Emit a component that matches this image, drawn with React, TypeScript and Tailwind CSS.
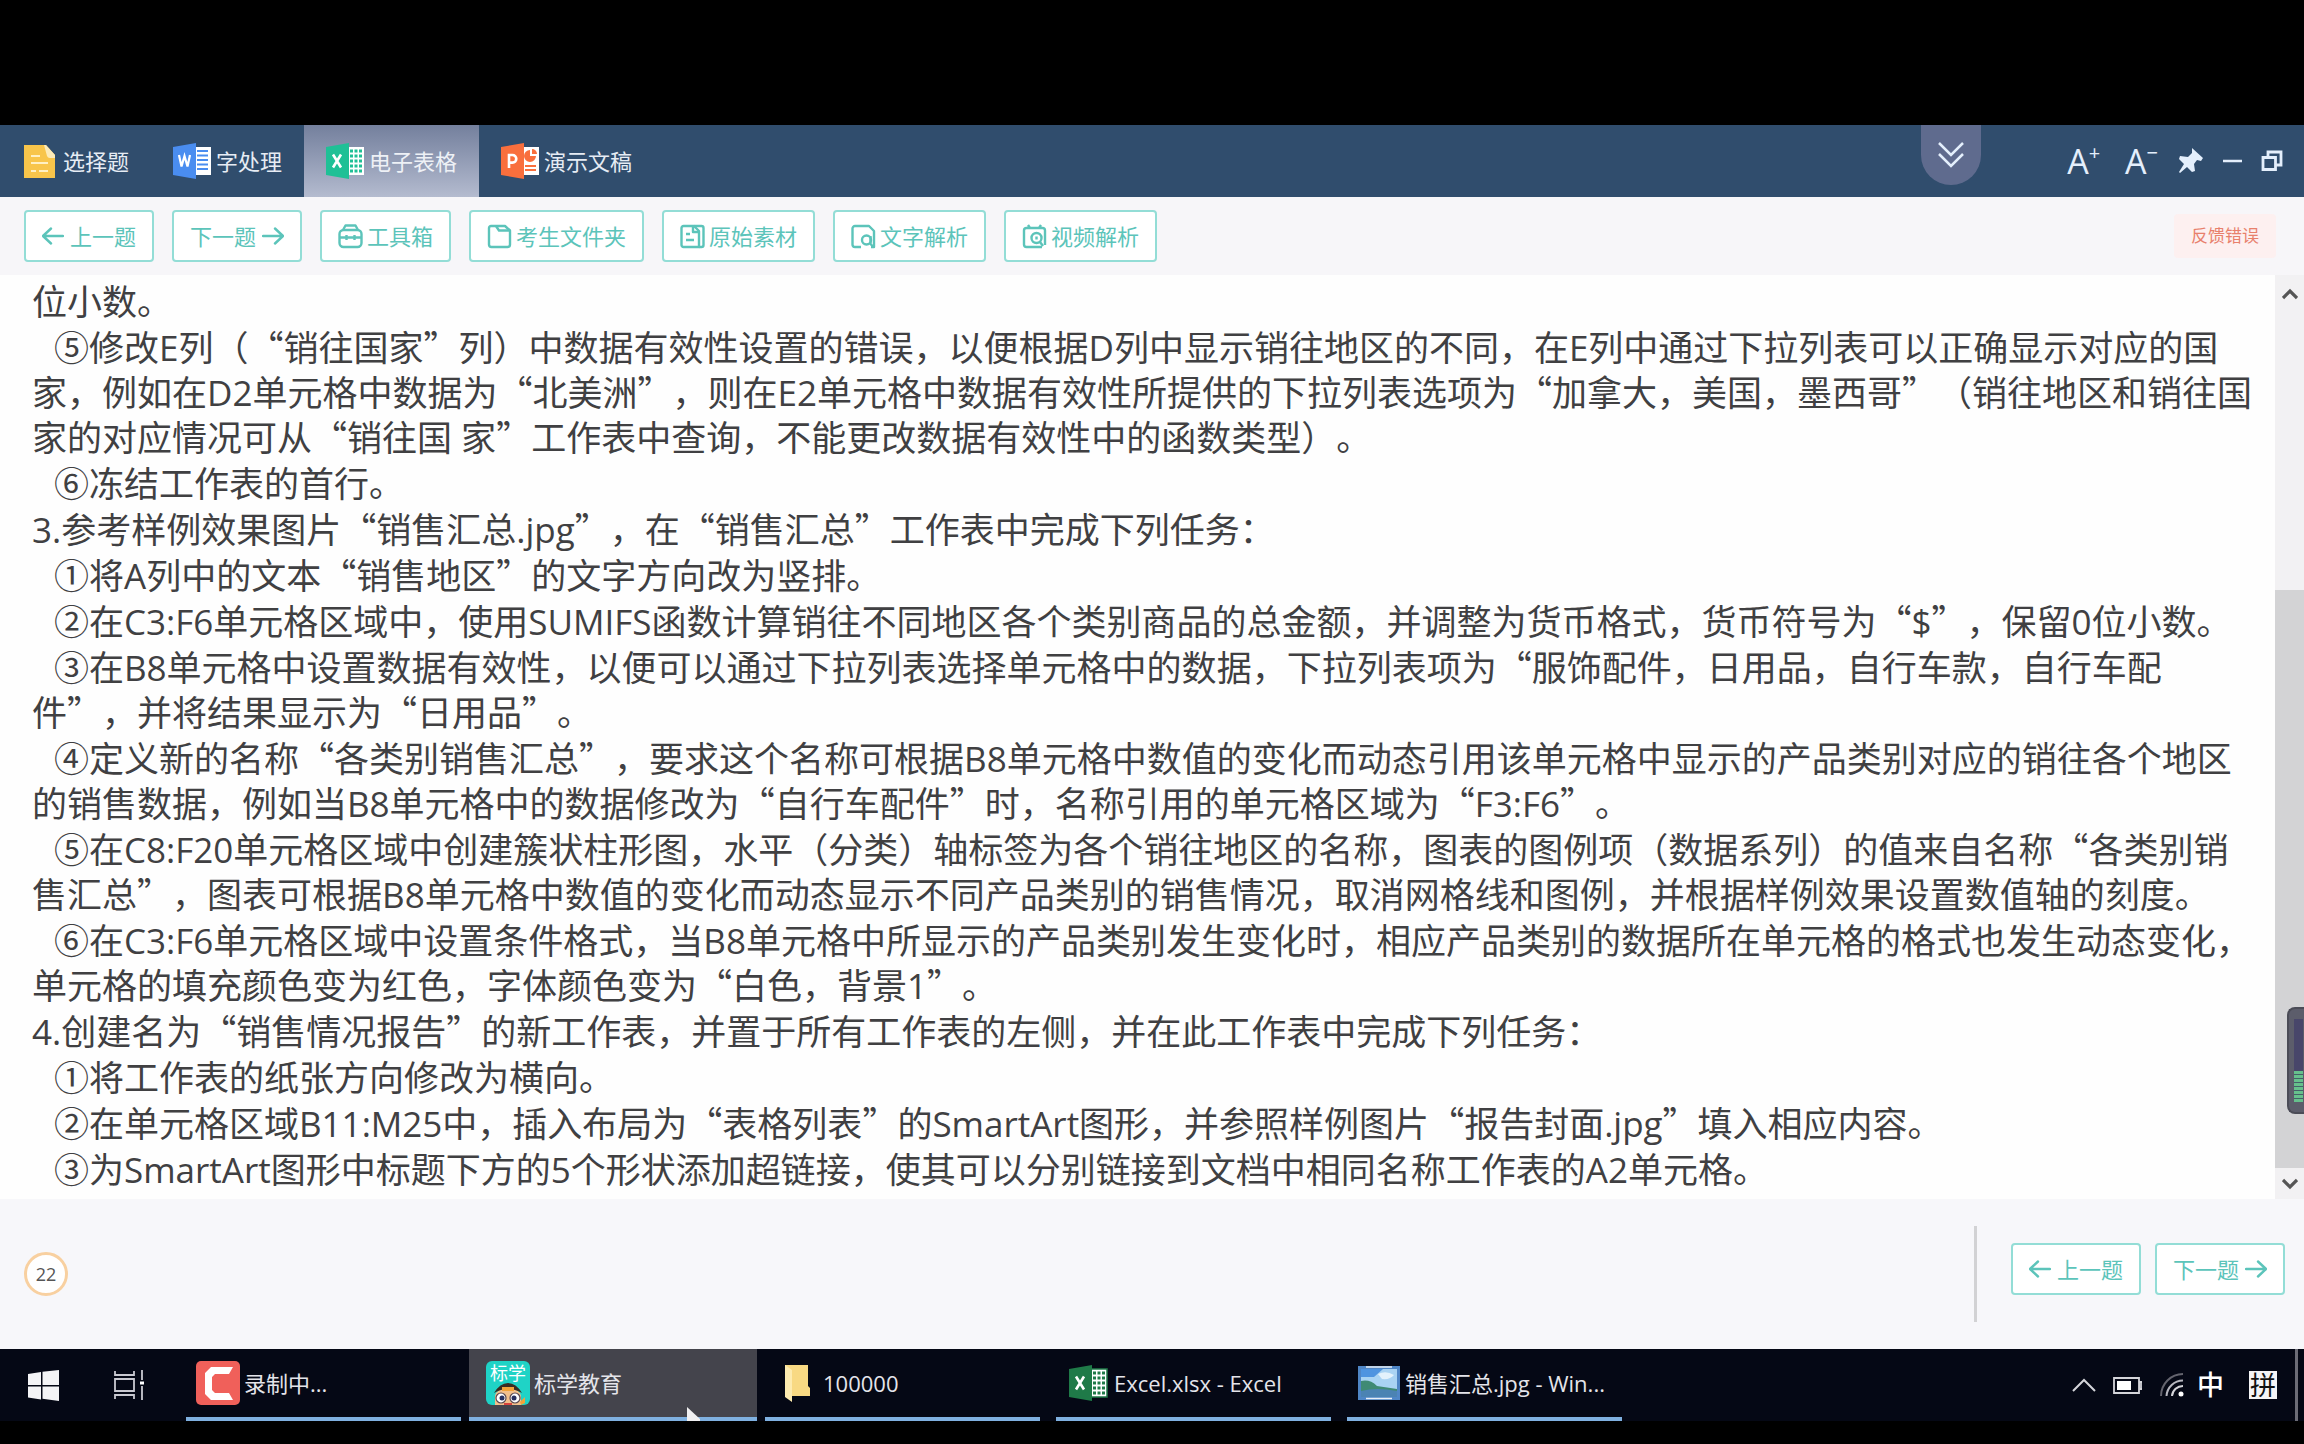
import React from "react";

const paragraphs: { indent: boolean; lines: string[] }[] = [
  { indent: false, lines: ["位小数。"] },
  {
    indent: true,
    lines: [
      "⑤修改E列（“销往国家”列）中数据有效性设置的错误，以便根据D列中显示销往地区的不同，在E列中通过下拉列表可以正确显示对应的国",
      "家，例如在D2单元格中数据为“北美洲”，则在E2单元格中数据有效性所提供的下拉列表选项为“加拿大，美国，墨西哥”（销往地区和销往国",
      "家的对应情况可从“销往国 家”工作表中查询，不能更改数据有效性中的函数类型）。",
    ],
  },
  { indent: true, lines: ["⑥冻结工作表的首行。"] },
  { indent: false, lines: ["3.参考样例效果图片“销售汇总.jpg”，在“销售汇总”工作表中完成下列任务："] },
  { indent: true, lines: ["①将A列中的文本“销售地区”的文字方向改为竖排。"] },
  {
    indent: true,
    lines: [
      "②在C3:F6单元格区域中，使用SUMIFS函数计算销往不同地区各个类别商品的总金额，并调整为货币格式，货币符号为“$”，保留0位小数。",
    ],
  },
  {
    indent: true,
    lines: [
      "③在B8单元格中设置数据有效性，以便可以通过下拉列表选择单元格中的数据，下拉列表项为“服饰配件，日用品，自行车款，自行车配",
      "件”，并将结果显示为“日用品”。",
    ],
  },
  {
    indent: true,
    lines: [
      "④定义新的名称“各类别销售汇总”，要求这个名称可根据B8单元格中数值的变化而动态引用该单元格中显示的产品类别对应的销往各个地区",
      "的销售数据，例如当B8单元格中的数据修改为“自行车配件”时，名称引用的单元格区域为“F3:F6”。",
    ],
  },
  {
    indent: true,
    lines: [
      "⑤在C8:F20单元格区域中创建簇状柱形图，水平（分类）轴标签为各个销往地区的名称，图表的图例项（数据系列）的值来自名称“各类别销",
      "售汇总”，图表可根据B8单元格中数值的变化而动态显示不同产品类别的销售情况，取消网格线和图例，并根据样例效果设置数值轴的刻度。",
    ],
  },
  {
    indent: true,
    lines: [
      "⑥在C3:F6单元格区域中设置条件格式，当B8单元格中所显示的产品类别发生变化时，相应产品类别的数据所在单元格的格式也发生动态变化，",
      "单元格的填充颜色变为红色，字体颜色变为“白色，背景1”。",
    ],
  },
  { indent: false, lines: ["4.创建名为“销售情况报告”的新工作表，并置于所有工作表的左侧，并在此工作表中完成下列任务："] },
  { indent: true, lines: ["①将工作表的纸张方向修改为横向。"] },
  {
    indent: true,
    lines: ["②在单元格区域B11:M25中，插入布局为“表格列表”的SmartArt图形，并参照样例图片“报告封面.jpg”填入相应内容。"],
  },
  {
    indent: true,
    lines: ["③为SmartArt图形中标题下方的5个形状添加超链接，使其可以分别链接到文档中相同名称工作表的A2单元格。"],
  },
];

/* Curly quotes take the full-width form of the Chinese face. */
function Line({ text, indent }: { text: string; indent: boolean }) {
  return (
    <span className={indent ? "block whitespace-nowrap pl-[22px]" : "block whitespace-nowrap"}>
      {text.split(/([“”])/).map((part, i) =>
        part === "“" || part === "”" ? (
          <span key={i} className='font-["Noto_Sans_CJK_SC",sans-serif] leading-none'>
            {part}
          </span>
        ) : (
          part
        ),
      )}
    </span>
  );
}

function DocIcon() {
  return (
    <svg width="35" height="34" viewBox="0 0 35 34">
      <path d="M0 1h22l9 10v23H0z" fill="#f8c54b" />
      <path d="M20 1h2l9 10v3h-5a3 3 0 0 1-3-2z" fill="#fdebb8" />
      <path d="M7 12h9M7 19h17M7 27h5M15 27h9" stroke="#fff0c4" strokeWidth="2" />
    </svg>
  );
}

function OfficeIcon({ kind, color, dark }: { kind: "W" | "X" | "P"; color: string; dark?: boolean }) {
  return (
    <svg width="39" height="36" viewBox="0 0 39 36">
      <path d="M20 4h18v28H20z" fill="#fff" stroke={dark ? color : "none"} strokeWidth="1.5" />
      {kind === "W" && <path d="M24 8h11M24 12.500h11M24 17h11M24 21.500h11M24 26h11" stroke={color} strokeWidth="2.200" />}
      {kind === "X" && (
        <path
          d="M24 8h3M28.500 8h3M33 8h3M24 13h3M28.500 13h3M33 13h3M24 18h3M28.500 18h3M33 18h3M24 23h3M28.500 23h3M33 23h3M24 28h3M28.500 28h3M33 28h3"
          stroke={color}
          strokeWidth="3.200"
        />
      )}
      {kind === "P" && (
        <>
          <path d="M29 7a6 6 0 1 0 6 6h-6z" fill={color} />
          <path d="M31 6a5 5 0 0 1 5 5h-5z" fill={color} />
          <path d="M24 23h11M24 27h11" stroke={color} strokeWidth="2" />
        </>
      )}
      <path d="M0 4L23 0v36L0 32z" fill={color} />
      {kind === "W" && <path d="M6 12l2.500 11.500L11.500 13l3 10.500L17 12" fill="none" stroke="#fff" strokeWidth="2.200" />}
      {kind === "X" && <path d="M7 11.500l8 13M15 11.500L7 24.500" stroke="#fff" strokeWidth="2.600" />}
      {kind === "P" && <path d="M8 25V12h3.500a3.800 3.800 0 0 1 0 7.600H8" fill="none" stroke="#fff" strokeWidth="2.600" />}
    </svg>
  );
}

function Arrow({ right }: { right?: boolean }) {
  return (
    <svg width="22" height="20" viewBox="0 0 22 20" fill="none" stroke="currentColor" strokeWidth="2.400" strokeLinecap="round" strokeLinejoin="round">
      {right ? <path d="M1 10h20M13 2.500l8 7.500-8 7.500" /> : <path d="M21 10H1M9 2.500L1 10l8 7.500" />}
    </svg>
  );
}

const toolPaths: Record<string, React.ReactNode> = {
  box: (
    <>
      <rect x="1.500" y="6" width="22" height="17" rx="4" />
      <path d="M5 6l2.500-4.500h10L20 6M1.500 13.500h22M8.500 11v5M16.500 11v5" />
    </>
  ),
  folder: (
    <>
      <path d="M4 2h14l5 4.500V20.500A2.500 2.500 0 0 1 20.500 23H4.500A2.500 2.500 0 0 1 2 20.500V4a2 2 0 0 1 2-2z" />
      <path d="M9 2l3 4.500h11" />
    </>
  ),
  source: (
    <>
      <path d="M3.500 2H14l5 5v16H3.500A2 2 0 0 1 1.500 21V4a2 2 0 0 1 2-2z" />
      <path d="M13 2v6h6M14 2h7.500a2 2 0 0 1 2 2v17a2 2 0 0 1-2 2H19M6 10h4M6 16h8" />
    </>
  ),
  text: (
    <>
      <path d="M10 23H4a2.500 2.500 0 0 1-2.500-2.500v-16A2.500 2.500 0 0 1 4 2h14l5 5v16h-3" />
      <circle cx="15.500" cy="16" r="4.500" />
      <path d="M19.500 12v8l3 3" />
    </>
  ),
  video: (
    <>
      <path d="M20 23H4.500A2.500 2.500 0 0 1 2 20.500V6.500A2.500 2.500 0 0 1 4.500 4h16A2.500 2.500 0 0 1 23 6.500V21M6 1l2 3M19 1l-2 3" />
      <circle cx="14.500" cy="14" r="5" />
      <path d="M14.500 12.500v3M18 18l3 4" />
    </>
  ),
};

function ToolIcon({ name }: { name: string }) {
  return (
    <svg width="25" height="25" viewBox="0 0 25 25" fill="none" stroke="currentColor" strokeWidth="2.400" strokeLinejoin="round">
      {toolPaths[name]}
    </svg>
  );
}

function ToolButton({ children }: { children: React.ReactNode }) {
  return (
    <button
      type="button"
      className="flex h-[52px] items-center justify-center gap-1 rounded-sm border-2 border-[#93ddd6] bg-white px-4 text-[22px] leading-8 whitespace-nowrap text-[#5cc4ba]"
    >
      {children}
    </button>
  );
}

function Prev() {
  return (
    <ToolButton>
      <Arrow />
      <span className="pl-0.5">上一题</span>
    </ToolButton>
  );
}

function Next() {
  return (
    <ToolButton>
      <span className="pr-0.5">下一题</span>
      <Arrow right />
    </ToolButton>
  );
}

const tabs = [
  { label: "选择题", icon: <DocIcon />, active: false },
  { label: "字处理", icon: <OfficeIcon kind="W" color="#4a8df0" />, active: false },
  { label: "电子表格", icon: <OfficeIcon kind="X" color="#1fc096" />, active: true },
  { label: "演示文稿", icon: <OfficeIcon kind="P" color="#f96f3d" />, active: false },
];

function Header() {
  return (
    <header className="flex h-[72px] items-stretch justify-between bg-[#304d6d]">
      <nav className="flex pl-0.5">
        {tabs.map((t) => (
          <button
            key={t.label}
            type="button"
            className={
              t.active
                ? "flex items-center gap-1 bg-linear-to-b from-[#74809d] to-[#b4bbcf] px-[22px] text-[22px] text-[#eef1f6]"
                : "flex items-center gap-1 px-[22px] text-[22px] text-[#e6ecf4]"
            }
          >
            {t.icon}
            <span>{t.label}</span>
          </button>
        ))}
      </nav>
      <div className="flex items-center pr-[21px] text-[#e4effc]">
        <button type="button" aria-label="展开" className="mr-[86px] flex h-[60px] w-[60px] items-center justify-center self-start rounded-b-full bg-[#5f6b8e]">
          <svg width="26" height="26" viewBox="0 0 26 26" fill="none" stroke="currentColor" strokeWidth="2.500">
            <path d="M1 1l12 12L25 1M1 12l12 12 12-12" />
          </svg>
        </button>
        <button type="button" aria-label="放大字体" className="mr-[25px] flex text-[34px] leading-9">
          A<sup className="top-0 text-xl leading-5">+</sup>
        </button>
        <button type="button" aria-label="缩小字体" className="mr-5 flex text-[34px] leading-9">
          A<sup className="top-0 text-xl leading-5">−</sup>
        </button>
        <button type="button" aria-label="置顶" className="mr-[18px]">
          <svg width="26" height="26" viewBox="0 0 26 26" fill="currentColor">
            <path d="M14 0l11 10-2 3-4-1-3 4 1 7-3 1-5-5-7 6-1-1 5-8-5-5 1-3 8 1 4-4z" />
          </svg>
        </button>
        <button type="button" aria-label="最小化" className="mr-[18px]">
          <svg width="21" height="20" viewBox="0 0 21 20">
            <path d="M1 10h19" stroke="currentColor" strokeWidth="2.500" />
          </svg>
        </button>
        <button type="button" aria-label="还原">
          <svg width="22" height="22" viewBox="0 0 22 22" fill="none" stroke="currentColor" strokeWidth="2.800">
            <path d="M2 7.500h12.500v12H2zM7 7V2h13v13h-5" />
          </svg>
        </button>
      </div>
    </header>
  );
}

function Toolbar() {
  return (
    <div className="flex h-[78px] items-center justify-between bg-[#f7f6f9] pr-7 pl-6">
      <div className="flex gap-[18px]">
        <Prev />
        <Next />
        <ToolButton>
          <ToolIcon name="box" />
          工具箱
        </ToolButton>
        <ToolButton>
          <ToolIcon name="folder" />
          考生文件夹
        </ToolButton>
        <ToolButton>
          <ToolIcon name="source" />
          原始素材
        </ToolButton>
        <ToolButton>
          <ToolIcon name="text" />
          文字解析
        </ToolButton>
        <ToolButton>
          <ToolIcon name="video" />
          视频解析
        </ToolButton>
      </div>
      <button type="button" className="h-11 rounded-sm bg-[#fdf0f0] px-[17px] text-[17px] text-[#e8806c]">
        反馈错误
      </button>
    </div>
  );
}

function ScrollArrow({ down }: { down?: boolean }) {
  return (
    <svg width="16" height="12" viewBox="0 0 16 12" fill="none" stroke="#555" strokeWidth="3.200">
      {down ? <path d="M1 2l7 7 7-7" /> : <path d="M1 10l7-7 7 7" />}
    </svg>
  );
}

function Content() {
  return (
    <main className="relative flex flex-1 bg-[#fefefe]">
      <article className="flex flex-1 flex-col gap-px pt-1 pl-8 text-[35px] leading-[45px] text-[#404042] [text-spacing-trim:space-all]">
        {paragraphs.map((p, i) => (
          <p key={i}>
            {p.lines.map((l, j) => (
              <Line key={j} text={l} indent={p.indent && j === 0} />
            ))}
          </p>
        ))}
      </article>
      <div className="flex w-[29px] flex-col items-center bg-[#f2f1f3]">
        <div className="flex h-[34px] items-center pt-1">
          <ScrollArrow />
        </div>
        <div className="flex w-full flex-1 flex-col justify-end">
          <div className="h-[578px] bg-[#d3d3d5]" />
        </div>
        <div className="flex h-[31px] items-center">
          <ScrollArrow down />
        </div>
      </div>
      <div className="absolute right-0 bottom-[85px] h-[107px] w-[17px] rounded-l-lg border-2 border-r-0 border-[#4b4c57] bg-[#5c5d6b] py-[10px] pl-[5px]">
        <div className="h-[52px] w-[9px] bg-[#48466a]" />
        <div className="h-[31px] w-[9px] bg-[repeating-linear-gradient(#66c08c_0_3px,#45606a_3px_4px)]" />
      </div>
    </main>
  );
}

function Footer() {
  return (
    <footer className="flex h-[150px] items-center justify-between bg-[#f7f7fa] pr-[19px] pl-6">
      <button type="button" className="h-[44px] w-[44px] rounded-full border-[3px] border-[#f8d0a0] bg-white text-lg leading-9 text-[#555]">
        22
      </button>
      <div className="flex items-center">
        <div className="mr-[34px] h-24 w-[3px] bg-[#d2d2d4]" />
        <div className="flex gap-[14px] pb-[10px]">
          <Prev />
          <Next />
        </div>
      </div>
    </footer>
  );
}

function CamtasiaIcon() {
  return (
    <svg width="44" height="44" viewBox="0 0 44 44">
      <rect width="44" height="44" rx="5" fill="#f0605a" />
      <path d="M37 6l-4 7H19l-3 3v13l3 3h14l4 7H15l-6-6V12l6-6z" fill="#fff" />
    </svg>
  );
}

function BiaoxueIcon() {
  return (
    <span className="relative flex h-11 w-11 justify-center overflow-hidden rounded-md bg-[#1fd3c6]">
      <span className="text-[18px] leading-6 whitespace-nowrap text-white">标学</span>
      <svg className="absolute bottom-0 left-1" width="36" height="22" viewBox="0 0 36 22">
        <path d="M5 22V13q2-8 13-8t13 8v9z" fill="#f3c08b" />
        <path d="M4 10Q10 0 18 0t14 10q-7-4-14-4T4 10z" fill="#3a2c22" />
        <path d="M12 4h12v4H12z" fill="#f3a33a" />
        <circle cx="11" cy="15" r="5" fill="#fff" stroke="#5a4a52" strokeWidth="1.200" />
        <circle cx="25" cy="15" r="5" fill="#fff" stroke="#5a4a52" strokeWidth="1.200" />
        <circle cx="12" cy="15" r="2.500" fill="#27305f" />
        <circle cx="24" cy="15" r="2.500" fill="#27305f" />
        <path d="M14 20h8v2h-8z" fill="#d9433d" />
        <path d="M30 19l5-5v6l-4 2z" fill="#f3a33a" />
      </svg>
    </span>
  );
}

function FolderIcon() {
  return (
    <svg width="26" height="38" viewBox="0 0 26 38">
      <path d="M1 1h23v21l2 2v8H1z" fill="#f8d983" />
      <path d="M1 1l7 5v32l-7-5z" fill="#fdebb0" />
    </svg>
  );
}

function PictureIcon() {
  return (
    <svg width="42" height="34" viewBox="0 0 42 34">
      <rect width="42" height="34" fill="#4f86c6" />
      <rect x="3" y="3" width="36" height="28" fill="#a9d3f3" />
      <path d="M3 3h22l-9 8H3z" fill="#4f94e0" />
      <path d="M20 8q8-4 16 1-4 5-12 4z" fill="#e3f2fc" />
      <path d="M3 15q9-2 16 5l20 3v8H3z" fill="#3f8a74" />
      <path d="M3 25q16-4 36 0v6H3z" fill="#4b83b3" />
      <path d="M8 1h26M8 32.500h26" stroke="#e8eef5" strokeWidth="1.500" />
    </svg>
  );
}

const tasks = [
  { label: "录制中...", icon: <CamtasiaIcon />, active: false },
  { label: "标学教育", icon: <BiaoxueIcon />, active: true },
  { label: "100000", icon: <FolderIcon />, active: false },
  { label: "Excel.xlsx - Excel", icon: <OfficeIcon kind="X" color="#1f7a48" dark />, active: false },
  { label: "销售汇总.jpg - Win...", icon: <PictureIcon />, active: false },
];

function Taskbar() {
  return (
    <div className="relative flex h-[72px] items-stretch bg-[#050815] text-[#e4e4ea]">
      <button type="button" aria-label="开始" className="flex w-[86px] items-center justify-center">
        <svg width="31" height="31" viewBox="0 0 31 31" fill="#f4f4f6">
          <path d="M0 4l13-2v13H0zM14.500 1.800L31 0v15H14.500zM0 16.500h13v13L0 27.500zM14.500 16.500H31V31l-16.500-2.200z" />
        </svg>
      </button>
      <button type="button" aria-label="任务视图" className="flex w-[86px] items-center justify-center">
        <svg width="32" height="30" viewBox="0 0 32 30" fill="none" stroke="#c9c9d0" strokeWidth="1.800">
          <path d="M2 1v4h19V1M2 9h19v12H2zM2 29v-4h19v4M29 0v10M29 16v14" />
          <path d="M27 11.500h4v3h-4z" fill="#fff" stroke="none" />
        </svg>
      </button>
      <div className="flex flex-1 pl-[6px]">
        {tasks.map((t) => (
          <button
            key={t.label}
            type="button"
            className={
              t.active
                ? "flex w-[288px] items-center gap-1 border-b-4 border-[#7fb0e0] bg-[#44444c] pl-[17px] text-[22px] whitespace-nowrap"
                : "mx-2 flex w-[275px] items-center gap-1 border-b-4 border-[#7fb0e0] pl-[10px] text-[22px] whitespace-nowrap"
            }
          >
            <span className="flex w-11 justify-center">{t.icon}</span>
            <span>{t.label}</span>
          </button>
        ))}
      </div>
      <div className="flex items-center">
        <button type="button" aria-label="显示隐藏的图标" className="mr-[17px]">
          <svg width="24" height="14" viewBox="0 0 24 14" fill="none" stroke="#d5d5da" strokeWidth="2">
            <path d="M1 13L12 2l11 11" />
          </svg>
        </button>
        <svg className="mr-[18px]" width="29" height="17" viewBox="0 0 29 17">
          <path d="M1 1h25v15H1zM27 5h2v7h-2z" fill="none" stroke="#d5d5da" strokeWidth="1.800" />
          <path d="M4 4h14v9H4z" fill="#fff" />
        </svg>
        <svg className="mr-[13px]" width="24" height="24" viewBox="0 0 24 24" fill="none" strokeWidth="2">
          <path d="M1 23A22 22 0 0 1 23 1" stroke="#64646e" />
          <path d="M6.500 23A16.500 16.500 0 0 1 23 7.500" stroke="#b8b8c0" />
          <path d="M12 23a11 11 0 0 1 11-10" stroke="#d5d5da" />
          <circle cx="21" cy="21" r="2.500" fill="#fff" />
        </svg>
        <button type="button" className="mr-[25px] text-[27px] leading-9 font-medium text-white">
          中
        </button>
        <button type="button" className="mr-[18px] h-7 w-7 bg-[#f4f4f6] text-center text-[26px] leading-7 text-[#111]">
          拼
        </button>
        <div className="mr-[6px] h-full w-[3px] bg-[#6c6c76]" />
      </div>
      <svg className="absolute bottom-0 left-[686px]" width="14" height="14" viewBox="0 0 14 14">
        <path d="M1 0l13 12v2H1z" fill="#f0f0f2" />
      </svg>
    </div>
  );
}

export default function App() {
  return (
    <div className='flex min-h-screen flex-col overflow-hidden bg-black pt-[125px] pb-[23px] font-["Open_Sans","Noto_Sans_CJK_SC",sans-serif]'>
      <Header />
      <Toolbar />
      <Content />
      <Footer />
      <Taskbar />
    </div>
  );
}
